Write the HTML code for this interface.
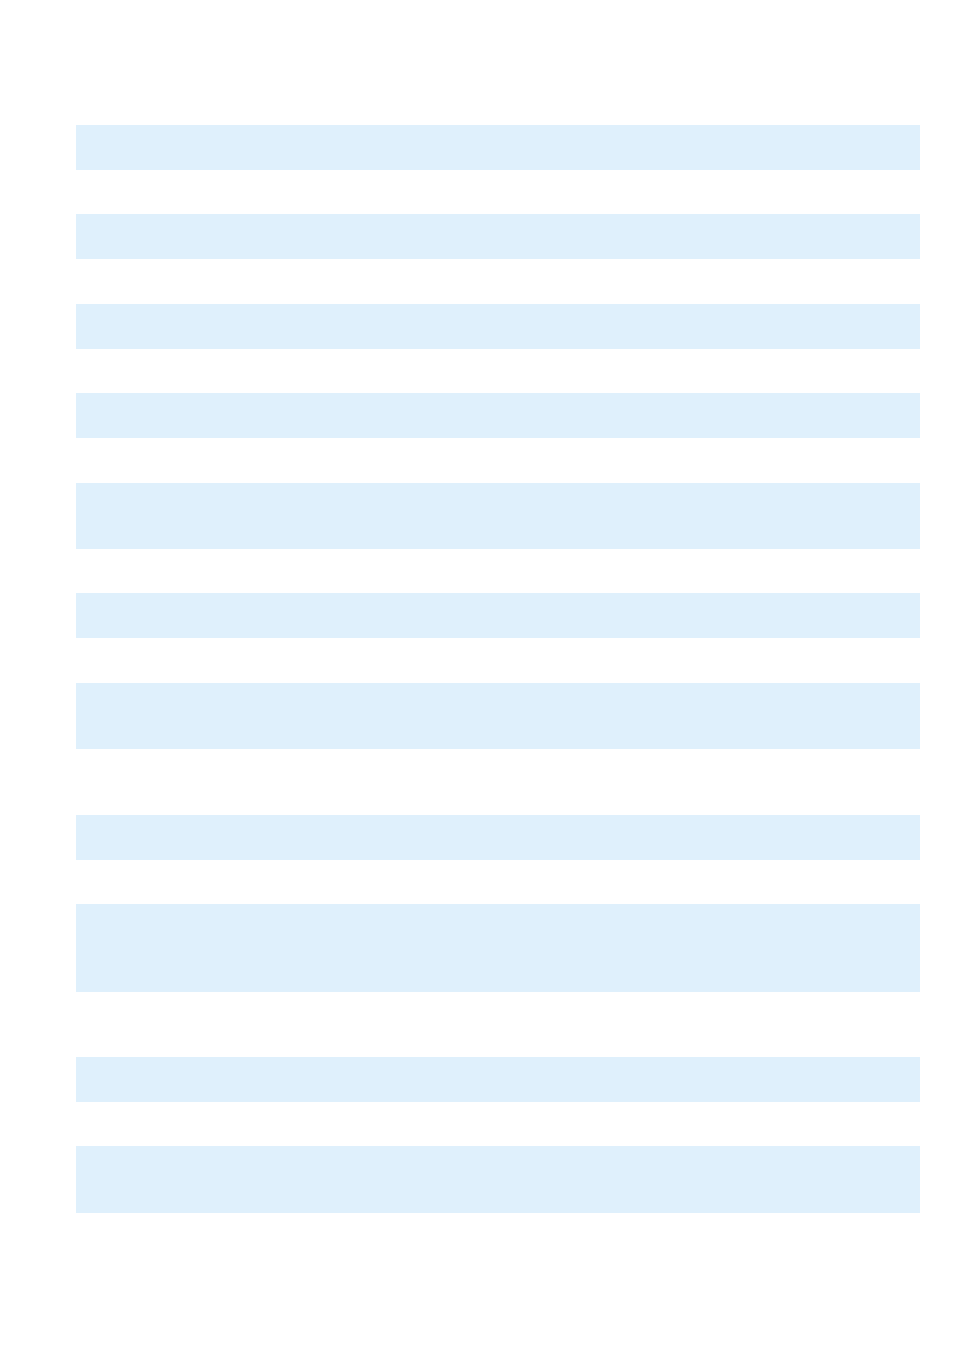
<!DOCTYPE html>
<html><head><meta charset="utf-8"><style>
html,body{margin:0;padding:0;background:#fff;width:954px;height:1350px;overflow:hidden;position:relative}
.b{position:absolute;left:76px;width:844px;background:#dff0fc}
</style></head><body>
<div class="b" style="top:125px;height:45px"></div>
<div class="b" style="top:214px;height:45px"></div>
<div class="b" style="top:304px;height:45px"></div>
<div class="b" style="top:393px;height:45px"></div>
<div class="b" style="top:483px;height:66px"></div>
<div class="b" style="top:593px;height:45px"></div>
<div class="b" style="top:683px;height:66px"></div>
<div class="b" style="top:815px;height:45px"></div>
<div class="b" style="top:904px;height:88px"></div>
<div class="b" style="top:1057px;height:45px"></div>
<div class="b" style="top:1146px;height:67px"></div>
</body></html>
